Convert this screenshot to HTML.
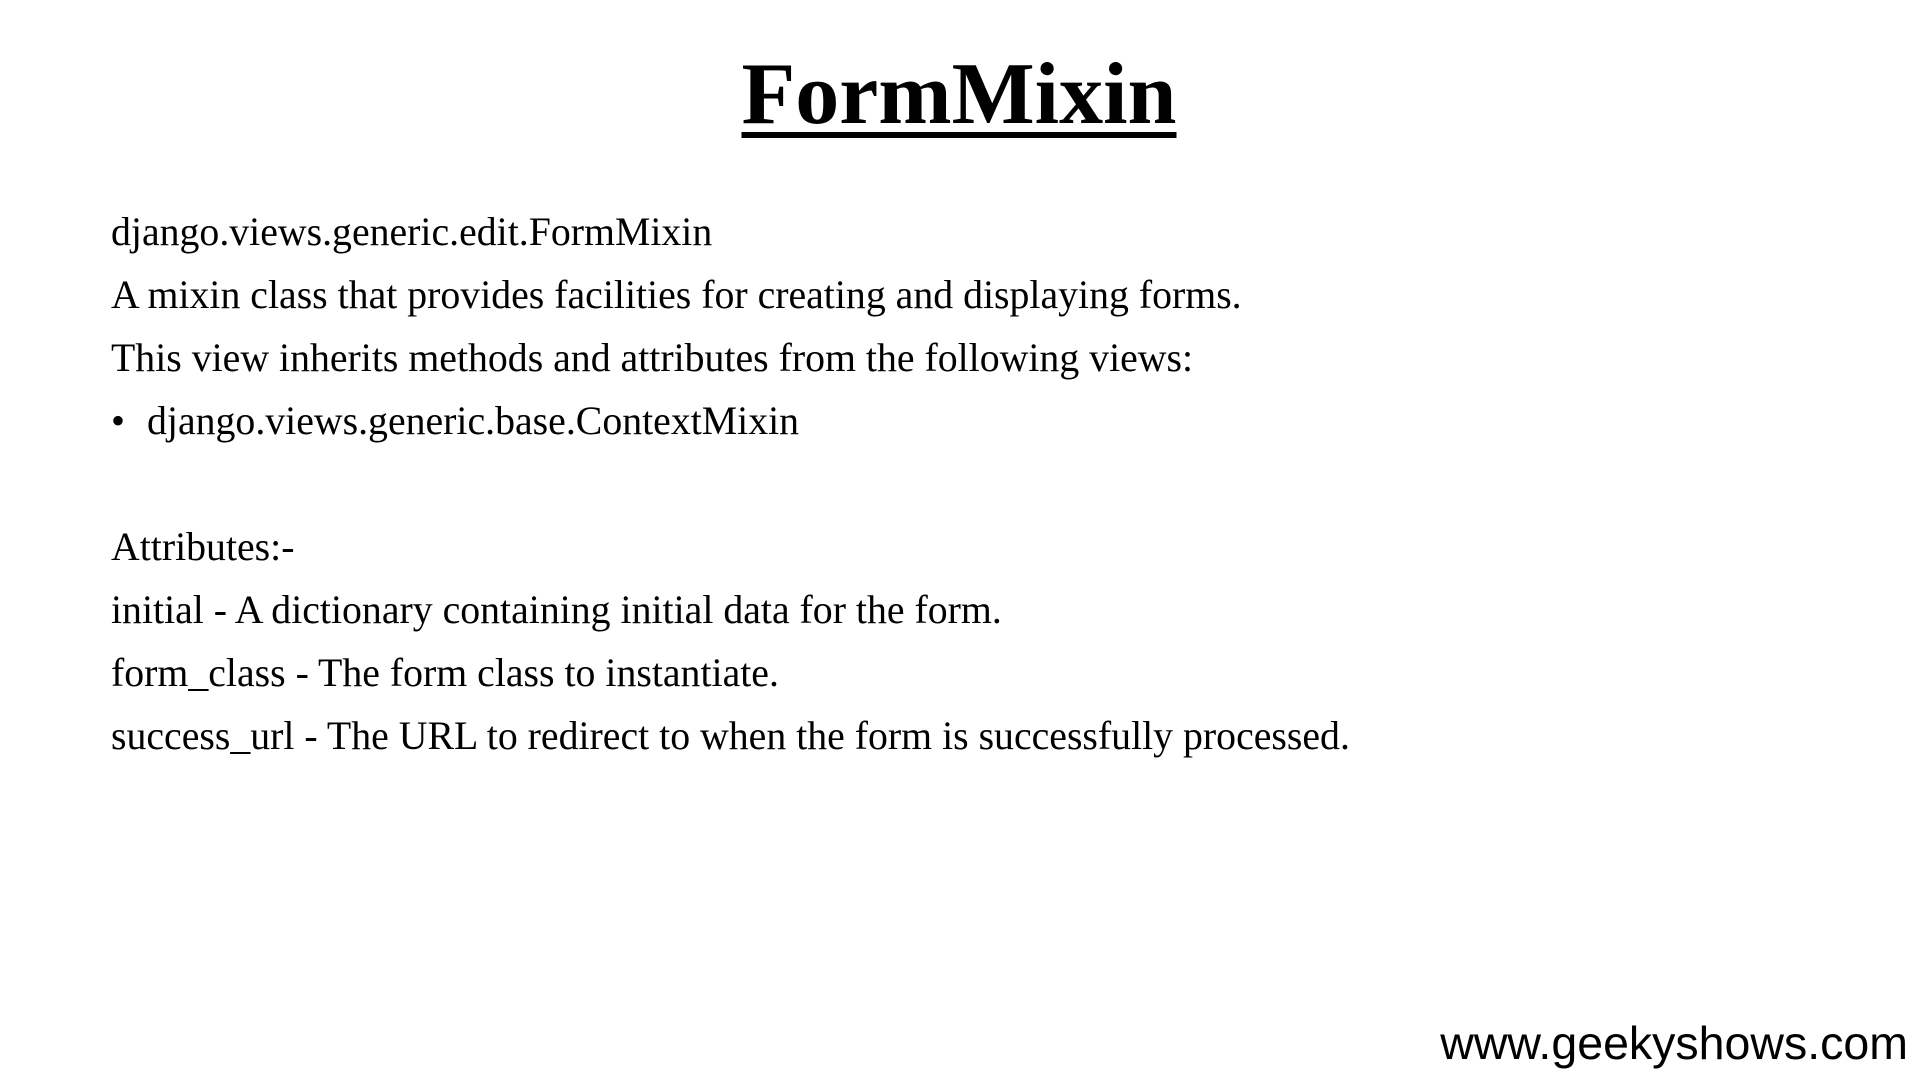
<!DOCTYPE html>
<html><head><meta charset="utf-8"><style>
html,body{margin:0;padding:0;background:#fff;width:1920px;height:1080px;overflow:hidden;position:relative}
.t{position:absolute;left:0;width:1918px;top:44px;text-align:center;font-family:"Liberation Serif",serif;font-weight:bold;font-size:88px;color:#000}
.t span{text-decoration:underline;text-decoration-thickness:6px;text-underline-offset:9px}
.b{position:absolute;left:111px;top:201px;font-family:"Liberation Serif",serif;font-size:39.8px;line-height:63px;color:#000;white-space:pre}
.bl{display:inline-block;width:36px}
.f{position:absolute;right:12px;top:1016px;font-family:"Liberation Sans",sans-serif;font-size:46.5px;color:#000}
</style></head><body>
<div class="t"><span>FormMixin</span></div>
<div class="b">django.views.generic.edit.FormMixin
A mixin class that provides facilities for creating and displaying forms.
This view inherits methods and attributes from the following views:
<span class="bl">•</span>django.views.generic.base.ContextMixin

Attributes:-
initial - A dictionary containing initial data for the form.
form_class - The form class to instantiate.
success_url - The URL to redirect to when the form is successfully processed.</div>
<div class="f">www.geekyshows.com</div>
</body></html>
